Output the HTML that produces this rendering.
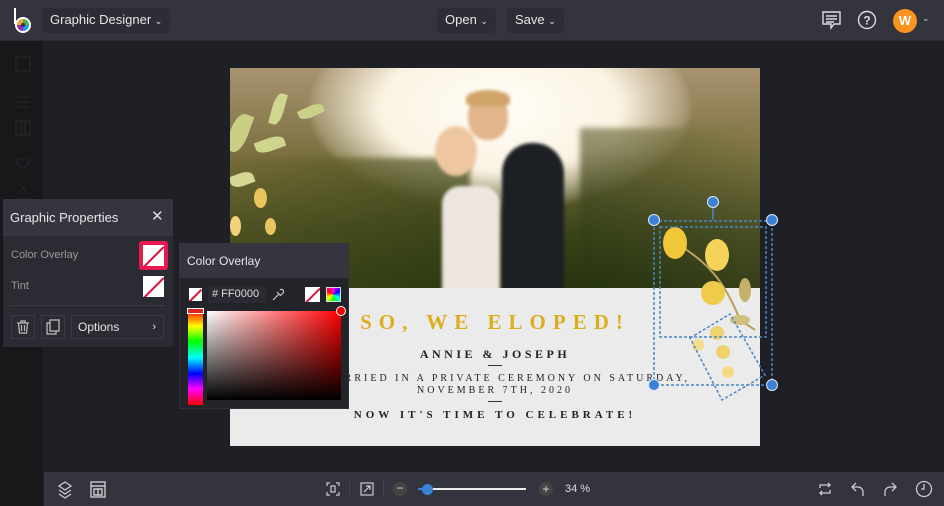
<!DOCTYPE html>
<html><head><meta charset="utf-8"><style>
*{margin:0;padding:0;box-sizing:border-box}
body{width:944px;height:506px;overflow:hidden;background:#1f2025;font-family:"Liberation Sans",sans-serif;position:relative;color:#ddd}
.abs{position:absolute}
.top{left:0;top:0;width:944px;height:41px;background:#33343e;border-bottom:1px solid #2a2b33}
.btn{position:absolute;background:#2c2d36;border-radius:3px;color:#e6e6e6;font-size:13px;line-height:24px;padding:0 8px}
.side{left:0;top:41px;width:43px;height:465px;background:#18181b}
.bot{left:44px;top:472px;width:900px;height:34px;background:#33343e}
.serif{font-family:"Liberation Serif",serif;color:#222;text-align:center;position:absolute;left:230px;width:530px}
.sw{position:absolute;background:#fff;overflow:hidden}
.sw:after{content:"";position:absolute;top:50%;width:140%;height:2px;background:#d4143e;transform:rotate(-45deg);transform-origin:center;left:-20%}
.b{filter:blur(3px)}
</style></head><body>
<div class="abs top"></div>
<svg class="abs" style="left:12px;top:6px" width="22" height="28" viewBox="0 0 22 28"><line x1="3" y1="2" x2="3" y2="18" stroke="#fff" stroke-width="2"/><circle cx="11" cy="19" r="8" fill="#fff"/><path d="M11 19 L11 13 A6 6 0 0 1 17 19Z" fill="#4caf50"/><path d="M11 19 L17 19 A6 6 0 0 1 11 25Z" fill="#2196f3"/><path d="M11 19 L11 25 A6 6 0 0 1 5 19Z" fill="#9c27b0"/><path d="M11 19 L5 19 A6 6 0 0 1 11 13Z" fill="#f4a336"/><circle cx="11" cy="19" r="2" fill="#333"/></svg>
<div class="btn" style="left:42px;top:8px">Graphic Designer <span style="font-size:9px">&#8964;</span></div>
<div class="btn" style="left:437px;top:8px">Open <span style="font-size:9px">&#8964;</span></div>
<div class="btn" style="left:507px;top:8px">Save <span style="font-size:9px">&#8964;</span></div>
<svg class="abs" style="left:821px;top:10px" width="22" height="20" viewBox="0 0 22 20" fill="none" stroke="#ddd" stroke-width="1.4"><path d="M2 2h17v12h-6l-3 4v-4H2z"/><path d="M5 6h11M5 9h11M5 12h8"/></svg>
<svg class="abs" style="left:857px;top:10px" width="20" height="20" viewBox="0 0 20 20"><circle cx="10" cy="10" r="8.5" fill="none" stroke="#ddd" stroke-width="1.4"/><text x="10" y="14.5" text-anchor="middle" fill="#ddd" font-size="12" font-family="Liberation Sans" font-weight="bold">?</text></svg>
<div class="abs" style="left:893px;top:9px;width:24px;height:24px;border-radius:50%;background:#f7931e;color:#fff;font-weight:bold;font-size:13px;text-align:center;line-height:24px">W</div>
<div class="abs" style="left:922px;top:13px;font-size:9px;color:#ccc">&#8964;</div>

<div class="abs side"></div>
<svg class="abs" style="left:14px;top:55px" width="18" height="140" viewBox="0 0 18 140" fill="none" stroke="#222226" stroke-width="1.5"><rect x="2" y="2" width="14" height="14"/><path d="M3 42h12M3 47h12M3 52h12"/><rect x="2" y="66" width="14" height="14"/><path d="M7 66v14M11 66v14"/><path d="M9 114l-6-6a3 3 0 0 1 6-3 3 3 0 0 1 6 3z"/><path d="M4 140l5-8 5 8"/></svg>

<!-- photo -->
<div class="abs" style="left:230px;top:68px;width:530px;height:220px;overflow:hidden;background:linear-gradient(180deg,#a89370 0%,#7a7040 40%,#3a4418 75%,#2a3510 100%)">
 <div class="abs b" style="left:80px;top:-60px;width:380px;height:200px;border-radius:50%;background:radial-gradient(ellipse at center,#fffef8 0%,#fbf3e2 45%,rgba(220,200,160,0) 75%)"></div>
 <div class="abs b" style="left:-20px;top:90px;width:260px;height:150px;background:linear-gradient(160deg,rgba(120,110,55,.6),rgba(40,55,15,.95))"></div>
 <div class="abs b" style="left:350px;top:60px;width:200px;height:170px;background:linear-gradient(200deg,rgba(150,135,80,.5),rgba(35,50,15,.95))"></div>
 <div class="abs" style="filter:blur(1.5px)">
 <div class="abs" style="left:272px;top:75px;width:62px;height:150px;border-radius:30px 30px 0 0;background:#1c1f24"></div>
 <div class="abs" style="left:238px;top:26px;width:40px;height:46px;border-radius:45%;background:#e4b48a"></div>
 <div class="abs" style="left:236px;top:22px;width:44px;height:16px;border-radius:50% 50% 20% 20%;background:#d1a56a"></div>
 <div class="abs" style="left:205px;top:58px;width:42px;height:50px;border-radius:50%;background:#eec7a0"></div>
 <div class="abs" style="left:212px;top:118px;width:58px;height:105px;border-radius:18px 18px 0 0;background:#ece6df"></div>
 </div>
 <div class="abs" style="left:0;top:45px;width:18px;height:40px;border-radius:50% 0;background:#c8cf84;transform:rotate(20deg)"></div>
 <div class="abs" style="left:42px;top:25px;width:12px;height:32px;border-radius:50% 0;background:#cfd68f;transform:rotate(15deg)"></div>
 <div class="abs" style="left:25px;top:70px;width:30px;height:13px;border-radius:0 50%;background:#d0d58e;transform:rotate(-20deg)"></div>
 <div class="abs" style="left:68px;top:38px;width:26px;height:11px;border-radius:0 50%;background:#c9d087;transform:rotate(-25deg)"></div>
 <div class="abs" style="left:0;top:105px;width:24px;height:13px;border-radius:0 50%;background:#d4d894;transform:rotate(-20deg)"></div>
 <div class="abs" style="left:24px;top:120px;width:13px;height:20px;border-radius:50%;background:#ebc55a"></div>
 <div class="abs" style="left:0;top:148px;width:11px;height:20px;border-radius:50%;background:#f0d27a"></div>
 <div class="abs" style="left:35px;top:150px;width:11px;height:17px;border-radius:50%;background:#e9c462"></div>
</div>
<div class="abs" style="left:230px;top:288px;width:530px;height:158px;background:#ebebeb"></div>
<div class="serif" style="top:310px;font-size:21px;letter-spacing:7px;color:#dcae1d;font-weight:bold">SO, WE ELOPED!</div>
<div class="serif" style="top:347px;font-size:12px;letter-spacing:3.5px;font-weight:bold">ANNIE &amp; JOSEPH</div>
<div class="abs" style="left:488px;top:365px;width:14px;height:1px;background:#333"></div>
<div class="serif" style="top:373px;font-size:10px;letter-spacing:3px;white-space:nowrap;left:340px;width:350px;overflow:hidden;text-align:right;direction:rtl"><span style="direction:ltr;unicode-bidi:embed">MARRIED IN A PRIVATE CEREMONY ON SATURDAY,</span></div>
<div class="serif" style="top:385px;font-size:10px;letter-spacing:3px">NOVEMBER 7TH, 2020</div>
<div class="abs" style="left:488px;top:401px;width:14px;height:1px;background:#333"></div>
<div class="serif" style="top:409px;font-size:11px;letter-spacing:4px;font-weight:bold">NOW IT'S TIME TO CELEBRATE!</div>

<svg class="abs" style="left:640px;top:190px" width="150" height="220" viewBox="0 0 150 220">
 <path d="M40 55 C60 70 80 80 100 130 L115 140" stroke="#b9a35a" stroke-width="2" fill="none"/>
 <ellipse cx="35" cy="53" rx="12" ry="16" fill="#f0c737"/>
 <ellipse cx="77" cy="65" rx="12" ry="16" fill="#f3d35a"/>
 <ellipse cx="73" cy="103" rx="12" ry="12" fill="#eecb4a"/>
 <ellipse cx="105" cy="100" rx="6" ry="12" fill="#c4b06a"/>
 <ellipse cx="100" cy="130" rx="10" ry="5" fill="#cfc07f"/>
 <circle cx="77" cy="143" r="7" fill="#f0d270"/><circle cx="58" cy="155" r="6" fill="#f3dc8a"/><circle cx="83" cy="162" r="7" fill="#f0d26c"/><circle cx="88" cy="182" r="6" fill="#f3da80"/>
 <g fill="none" stroke="#4a86c8" stroke-width="1.5" stroke-dasharray="3 2">
  <rect x="14" y="31" width="118" height="164"/>
  <rect x="20" y="37" width="106" height="110"/>
  <path d="M50 148 L90 124 L125 185 L82 210 Z"/>
 </g>
 <line x1="73" y1="12" x2="73" y2="30" stroke="#4a86c8" stroke-width="1.5"/>
 <g fill="#3b82d6" stroke="#e0e8f5" stroke-width="1"><circle cx="73" cy="12" r="5.5"/><circle cx="14" cy="30" r="5.5"/><circle cx="132" cy="30" r="5.5"/><circle cx="14" cy="195" r="5.5"/><circle cx="132" cy="195" r="5.5"/></g>
</svg>

<div class="abs" style="left:3px;top:199px;width:170px;height:148px;background:#2b2c33;border-radius:2px"></div>
<div class="abs" style="left:3px;top:199px;width:170px;height:37px;background:#34353f"></div>
<div class="abs" style="left:10px;top:210px;font-size:13px;color:#e8e8e8">Graphic Properties</div>
<div class="abs" style="left:151px;top:207px;font-size:15px;color:#ddd">&#x2715;</div>
<div class="abs" style="left:11px;top:249px;font-size:11px;color:#999">Color Overlay</div>
<div class="abs" style="left:11px;top:280px;font-size:11px;color:#999">Tint</div>
<div class="abs" style="left:139px;top:241px;width:29px;height:29px;background:#e8194f;border-radius:3px"></div>
<div class="sw" style="left:143px;top:245px;width:21px;height:21px"></div>
<div class="sw" style="left:143px;top:276px;width:21px;height:21px"></div>
<div class="abs" style="left:10px;top:305px;width:155px;height:1px;background:#3a3b44"></div>
<svg class="abs" style="left:11px;top:315px" width="24" height="24" viewBox="0 0 24 24" fill="none"><rect x=".5" y=".5" width="23" height="23" stroke="#3a3b44"/><path d="M6 8h12M10 8V6h4v2M7.5 8l1 10h7l1-10M10.5 10v6M13.5 10v6" stroke="#bbb" stroke-width="1.2"/></svg>
<svg class="abs" style="left:41px;top:315px" width="24" height="24" viewBox="0 0 24 24"><rect x=".5" y=".5" width="23" height="23" fill="none" stroke="#3a3b44"/><rect x="6" y="8" width="9" height="11" fill="none" stroke="#bbb" stroke-width="1.3"/><rect x="9" y="5" width="9" height="11" fill="#2b2c33" stroke="#bbb" stroke-width="1.3"/></svg>
<div class="abs" style="left:71px;top:315px;width:93px;height:24px;border:1px solid #3a3b44;border-radius:2px;font-size:12px;line-height:22px;padding-left:6px;color:#e6e6e6">Options<span style="position:absolute;right:7px;font-size:11px">&#8250;</span></div>

<div class="abs" style="left:179px;top:243px;width:170px;height:166px;background:#23242a;border:1px solid #2f3038"></div>
<div class="abs" style="left:179px;top:243px;width:170px;height:35px;background:#34353f"></div>
<div class="abs" style="left:187px;top:254px;font-size:12px;color:#e8e8e8">Color Overlay</div>
<div class="sw" style="left:189px;top:288px;width:13px;height:13px"></div>
<div class="abs" style="left:208px;top:286px;width:58px;height:17px;background:#2a2b32;font-size:11px;line-height:17px;padding-left:4px;color:#ddd"># FF0000</div>
<svg class="abs" style="left:271px;top:288px" width="13" height="14" viewBox="0 0 13 14" fill="none" stroke="#ccc" stroke-width="1.2"><path d="M2 12 L8 6 M6 4 L10 8 M9 2 a2 2 0 0 1 3 3 L10 7"/></svg>
<div class="sw" style="left:305px;top:287px;width:15px;height:15px"></div>
<div class="abs" style="left:326px;top:287px;width:15px;height:15px;border:1px solid #ddd;background:conic-gradient(#f0f,#00f,#0ff,#0f0,#ff0,#f00,#f0f)"></div>
<div class="abs" style="left:188px;top:310px;width:15px;height:95px;background:linear-gradient(#f00,#ff0 17%,#0f0 33%,#0ff 50%,#00f 67%,#f0f 83%,#f00)"></div>
<div class="abs" style="left:187px;top:308px;width:17px;height:6px;border:1px solid #fff;background:#d22"></div>
<div class="abs" style="left:207px;top:311px;width:134px;height:89px;background:linear-gradient(to bottom,transparent,#000),linear-gradient(to right,#fff,#f00)"></div>
<div class="abs" style="left:336px;top:306px;width:10px;height:10px;border-radius:50%;background:#e00;border:1.5px solid #fff"></div>

<div class="abs bot"></div>
<svg class="abs" style="left:57px;top:481px" width="16" height="18" viewBox="0 0 16 18" fill="none" stroke="#ccc" stroke-width="1.3"><path d="M8 1l6 4-6 4-6-4z M2 9l6 4 6-4 M2 13l6 4 6-4"/></svg>
<svg class="abs" style="left:90px;top:481px" width="16" height="17" viewBox="0 0 16 17" fill="none" stroke="#ccc" stroke-width="1.4"><rect x="1" y="1" width="14" height="15"/><path d="M1 5h14M4 8h8v6H4z M8 8v6"/></svg>
<svg class="abs" style="left:326px;top:482px" width="14" height="14" viewBox="0 0 14 14" fill="none" stroke="#ccc" stroke-width="1.2"><path d="M1 4V1h3M10 1h3v3M13 10v3h-3M4 13H1v-3"/><rect x="5" y="4" width="4" height="6"/></svg>
<div class="abs" style="left:349px;top:480px;width:1px;height:18px;background:#444"></div>
<svg class="abs" style="left:360px;top:482px" width="14" height="14" viewBox="0 0 14 14" fill="none" stroke="#ccc" stroke-width="1.2"><rect x="1" y="1" width="12" height="12"/><path d="M4 10l6-6M6 4h4v4"/></svg>
<div class="abs" style="left:383px;top:480px;width:1px;height:18px;background:#444"></div>
<div class="abs" style="left:393px;top:482px;width:14px;height:14px;border-radius:50%;background:#444;color:#ddd;font-size:12px;line-height:13px;text-align:center">−</div>
<div class="abs" style="left:418px;top:488px;width:108px;height:2px;background:#eee"></div>
<div class="abs" style="left:418px;top:488px;width:10px;height:2px;background:#3b82d6"></div>
<div class="abs" style="left:422px;top:484px;width:11px;height:11px;border-radius:50%;background:#3b82d6"></div>
<div class="abs" style="left:539px;top:482px;width:14px;height:14px;border-radius:50%;background:#444;color:#ddd;font-size:12px;line-height:14px;text-align:center">+</div>
<div class="abs" style="left:565px;top:483px;font-size:11px;color:#ddd">34 %</div>
<svg class="abs" style="left:818px;top:481px" width="14" height="16" viewBox="0 0 14 16" fill="none" stroke="#ccc" stroke-width="1.3"><path d="M2 7V4h10M10 2l2 2-2 2M12 9v3H2M4 10l-2 2 2 2"/></svg>
<svg class="abs" style="left:851px;top:481px" width="14" height="16" viewBox="0 0 14 16" fill="none" stroke="#ccc" stroke-width="1.3"><path d="M5 2L1 6l4 4M1 6h6a5 5 0 0 1 5 5v4"/></svg>
<svg class="abs" style="left:883px;top:481px" width="14" height="16" viewBox="0 0 14 16" fill="none" stroke="#ccc" stroke-width="1.3"><path d="M9 2l4 4-4 4M13 6H7a5 5 0 0 0-5 5v4"/></svg>
<svg class="abs" style="left:915px;top:480px" width="18" height="18" viewBox="0 0 18 18" fill="none" stroke="#ccc" stroke-width="1.3"><circle cx="9" cy="9" r="7.5"/><path d="M9 4v5h-3"/></svg>
</body></html>
